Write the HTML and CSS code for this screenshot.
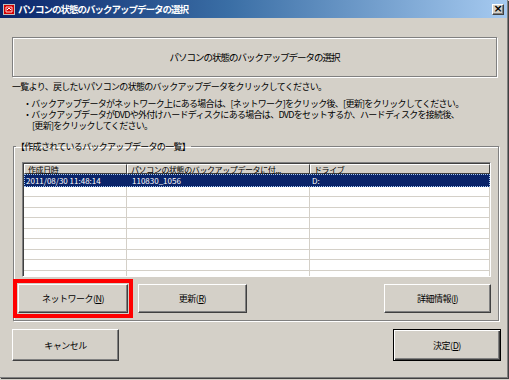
FILE: index.html
```html
<!DOCTYPE html>
<html lang="ja">
<head>
    <meta charset="UTF-8">
    <title>パソコンの状態のバックアップデータの選択</title>
    <link rel="stylesheet" href="styles.css">
</head>
<body>
    <div class="window">
        <div class="titlebar">
            <svg class="titlebar__icon" width="12" height="11" viewBox="0 0 12 11">
                <rect x="0" y="0" width="12" height="11" fill="#c0c0c0"/>
                <rect x="1" y="1" width="10" height="9" fill="#d40000"/>
                <path d="M3 3h6v5h-6z" fill="none" stroke="#ffd0d0" stroke-width="1"/>
                <path d="M4 6l2-2 2 2" fill="none" stroke="#fff" stroke-width="1"/>
            </svg>
            <span class="titlebar__text">パソコンの状態のバックアップデータの選択</span>
            <button class="titlebar__close">×</button>
        </div>

        <div class="content">
            <div class="heading">パソコンの状態のバックアップデータの選択</div>

            <p class="lead">一覧より、戻したいパソコンの状態のバックアップデータをクリックしてください。</p>
            <ul class="notes">
                <li>・バックアップデータがネットワーク上にある場合は、[ネットワーク]をクリック後、[更新]をクリックしてください。</li>
                <li>・バックアップデータがDVDや外付けハードディスクにある場合は、DVDをセットするか、ハードディスクを接続後、</li>
                <li class="notes__wrap">[更新]をクリックしてください。</li>
            </ul>

            <fieldset class="group">
                <legend class="group__title">【作成されているバックアップデータの一覧】</legend>
                <div class="list">
                    <div class="list__head">
                        <div class="col col--date">作成日時</div>
                        <div class="col col--name">パソコンの状態のバックアップデータに付...</div>
                        <div class="col col--drive">ドライブ</div>
                    </div>
                    <div class="list__row list__row--selected">
                        <div class="col col--date">2011/08/30 11:48:14</div>
                        <div class="col col--name">110830_1056</div>
                        <div class="col col--drive">D:</div>
                    </div>
                    <div class="list__row"><div class="col col--date"></div><div class="col col--name"></div><div class="col col--drive"></div></div>
                    <div class="list__row"><div class="col col--date"></div><div class="col col--name"></div><div class="col col--drive"></div></div>
                    <div class="list__row"><div class="col col--date"></div><div class="col col--name"></div><div class="col col--drive"></div></div>
                    <div class="list__row"><div class="col col--date"></div><div class="col col--name"></div><div class="col col--drive"></div></div>
                    <div class="list__row"><div class="col col--date"></div><div class="col col--name"></div><div class="col col--drive"></div></div>
                    <div class="list__row"><div class="col col--date"></div><div class="col col--name"></div><div class="col col--drive"></div></div>
                    <div class="list__row"><div class="col col--date"></div><div class="col col--name"></div><div class="col col--drive"></div></div>
                    <div class="list__row"><div class="col col--date"></div><div class="col col--name"></div><div class="col col--drive"></div></div>
                    <div class="list__row list__row--last"><div class="col col--date"></div><div class="col col--name"></div><div class="col col--drive"></div></div>
                </div>
                <div class="group__buttons">
                    <div class="highlight">
                        <button class="btn btn--network">ネットワーク(<u>N</u>)</button>
                    </div>
                    <button class="btn btn--update">更新(<u>R</u>)</button>
                    <button class="btn btn--detail">詳細情報(<u>I</u>)</button>
                </div>
            </fieldset>

            <div class="footer">
                <button class="btn btn--cancel">キャンセル</button>
                <button class="btn btn--ok">決定(<u>D</u>)</button>
            </div>
        </div>
    </div>
</body>
</html>
```

FILE: styles.css
```css
html{
    height: 100%;
}
body{
    margin: 0;
    width: 509px;
    height: 380px;
    overflow: hidden;
    background-color: #d4d0c8;
    font-family: "Noto Sans CJK JP", "DejaVu Sans", sans-serif;
    font-size: 9px;
    color: #000;
}
button{
    font-family: inherit;
    font-size: inherit;
    color: #000;
    padding: 0;
    cursor: pointer;
}
u{
    text-decoration: underline;
}
.window{
    width: 507px;
    height: 377px;
    border-right: 1px solid #808080;
    border-bottom: 1px solid #808080;
    box-shadow: 1px 1px 0 #404040;
    display: flex;
    flex-direction: column;
}

/* title bar */
.titlebar{
    height: 18px;
    display: flex;
    align-items: center;
    padding: 0 3px;
    background: linear-gradient(to right, #0a246a, #3a6ea5 45%, #a6caf0);
}
.titlebar__icon{
    flex: none;
    margin-right: 3px;
}
.titlebar__text{
    color: #fff;
    font-weight: bold;
    font-size: 9.5px;
    letter-spacing: -1px;
    white-space: nowrap;
}
.titlebar__close{
    margin-left: auto;
    width: 12px;
    height: 11px;
    line-height: 8px;
    font-size: 11px;
    font-weight: bold;
    font-family: "DejaVu Sans", sans-serif;
    background-color: #d4d0c8;
    border: 1px solid;
    border-color: #fff #404040 #404040 #fff;
    box-shadow: inset -1px -1px #808080;
}

.content{
    flex: 1;
    padding: 19px 10px 0 12px;
    letter-spacing: -0.7px;
}
.heading{
    height: 38px;
    width: 483px;
    display: flex;
    align-items: center;
    justify-content: center;
    border: 1px solid #808080;
    box-shadow: inset 1px 1px #fff, 1px 1px #fff;
    font-size: 9.5px;
    letter-spacing: -1px;
}
.lead{
    margin: 4px 0 0 0;
    line-height: 11px;
    white-space: nowrap;
}
.notes{
    list-style: none;
    margin: 6px 0 0 0;
    padding: 0 0 0 11px;
    line-height: 11px;
    white-space: nowrap;
}
.notes__wrap{
    padding-left: 9px;
}

/* group of backup list */
.group{
    margin: 10px 0 0 1px;
    padding: 10px 7px 6px 8px;
    width: 486px;
    box-sizing: border-box;
    border: 1px solid #808080;
    box-shadow: inset 1px 1px #fff, 1px 1px #fff;
    height: 180px;
}
.group__title{
    padding: 0 1px 0 0;
    margin-left: -6px;
    line-height: 11px;
}
.list{
    height: 115px;
    box-sizing: border-box;
    border: 1px solid;
    border-color: #808080 #fff #fff #808080;
    box-shadow: inset 1px 1px #404040;
    background-color: #fff;
    overflow: hidden;
    letter-spacing: 0;
    padding: 1px 0 0 1px;
}
.list__head, .list__row{
    display: flex;
}
.list__head .col{
    height: 10px;
    line-height: 10px;
    padding-left: 3px;
    font-size: 8px;
    letter-spacing: -0.4px;
    background-color: #d4d0c8;
    border: 1px solid;
    border-color: #fff #404040 #404040 #fff;
    white-space: nowrap;
}
.col--date{
    width: 103px;
    box-sizing: border-box;
}
.col--name{
    width: 183px;
    box-sizing: border-box;
}
.col--drive{
    flex: 1;
    box-sizing: border-box;
}
.list__row .col{
    border-right: 1px solid #d4d0c8;
}
.list__row{
    height: 10px;
    border-bottom: 1px solid #d4d0c8;
}
.list__row:nth-child(odd){
    height: 9px;
}
.list__row--last{
    border-bottom: none;
}
.list__row--selected{
    height: 13px !important;
    background-color: #0a246a;
    color: #fff;
    border-bottom: none;
    outline: 1px dotted #a6caf0;
    outline-offset: -1px;
    font-size: 8px;
    line-height: 13px;
}
.list__row--selected .col{
    border-right: none;
    padding-left: 2px;
}
.list__row--selected .col--name{
    padding-left: 5px;
}

.group__buttons{
    display: flex;
    align-items: center;
    margin-top: 2px;
}
.highlight{
    border: 4px solid #ff0000;
    padding: 1px;
    margin-left: -9px;
}
.btn{
    background-color: #d4d0c8;
    border: 1px solid;
    border-color: #fff #404040 #404040 #fff;
    box-shadow: inset -1px -1px #808080, inset 1px 1px #d4d0c8;
    letter-spacing: -0.5px;
}
.btn--network{
    display: block;
    width: 110px;
    height: 29px;
}
.btn--update{
    margin-left: 5px;
    width: 109px;
    height: 29px;
}
.btn--detail{
    margin-left: auto;
    width: 107px;
    height: 29px;
}

.footer{
    display: flex;
    justify-content: space-between;
    margin: 8px -4px 0 0;
}
.btn--cancel{
    width: 107px;
    height: 32px;
}
.btn--ok{
    width: 108px;
    height: 32px;
    border: 1px solid #000;
    box-shadow: inset 1px 1px #fff, inset -1px -1px #404040, inset -2px -2px #808080;
}
```
